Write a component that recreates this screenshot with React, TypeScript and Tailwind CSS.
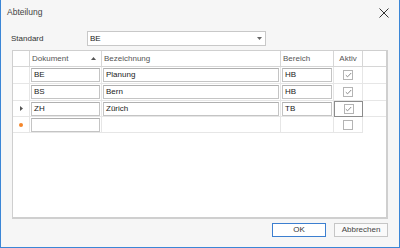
import React from "react";

const rows = [
  { doc: "BE", name: "Planung", area: "HB", active: true, current: false },
  { doc: "BS", name: "Bern", area: "HB", active: true, current: false },
  { doc: "ZH", name: "Zürich", area: "TB", active: true, current: true },
];

const font = { fontFamily: '"Liberation Sans", Arial, sans-serif' };

function Check({ checked }: { checked: boolean }) {
  return (
    <span className="flex h-[10px] w-[10px] items-center justify-center border border-[#b4b4b4] bg-white">
      {checked && (
        <svg width="7" height="6" viewBox="0 0 7 6">
          <path d="M0.8 3.2 L2.6 4.8 L6.2 1" fill="none" stroke="#8a8a8a" strokeWidth="1" />
        </svg>
      )}
    </span>
  );
}

function CellInput({ value }: { value: string }) {
  return (
    <div className="m-px flex h-[14px] flex-1 items-center border border-[#c4c4c4] border-t-[#b0b0b0] bg-white px-[2px] text-[#222]">
      {value}
    </div>
  );
}

export default function App() {
  return (
    <div
      className="flex h-[248px] w-[400px] flex-col border-x border-b border-[#3b86d6] bg-[#f6f6f6] text-[8px] text-[#333]"
      style={font}
    >
      {/* title bar */}
      <div className="flex h-[25px] items-center justify-between pl-[6px] pr-[10px]">
        <span className="text-[8.5px] text-[#444]">Abteilung</span>
        <svg width="10" height="10" viewBox="0 0 10 10">
          <path d="M0.5 0.5 L9.5 9.5 M9.5 0.5 L0.5 9.5" stroke="#333" strokeWidth="1" />
        </svg>
      </div>

      {/* standard */}
      <div className="mt-[6px] flex h-[15px] items-center pl-[10px]">
        <span className="w-[76px]">Standard</span>
        <div className="flex h-[15px] w-[179px] items-center justify-between border border-[#c8c8c8] bg-white pl-[2px] pr-[3px] text-[#222]">
          <span>BE</span>
          <svg width="5" height="3" viewBox="0 0 5 3">
            <path d="M0 0 L5 0 L2.5 3 Z" fill="#666" />
          </svg>
        </div>
      </div>

      {/* grid */}
      <div className="mx-[11px] mt-[4px] h-[169px] border border-[#cfcfcf] border-b-2 border-r-2 bg-white">
        <div className="grid grid-cols-[17px_72px_179px_53px_29px_1fr] grid-rows-[16px_17px_17px_16px_16px]">
          {/* header */}
          <div className="border-b border-r border-[#d6d6d6]" />
          <div className="flex items-center justify-between border-b border-r border-[#d6d6d6] pl-[2px] pr-[5px] text-[#555]">
            <span>Dokument</span>
            <svg width="5" height="3" viewBox="0 0 5 3">
              <path d="M0 3 L5 3 L2.5 0 Z" fill="#555" />
            </svg>
          </div>
          <div className="flex items-center border-b border-r border-[#d6d6d6] pl-[2px] text-[#555]">Bezeichnung</div>
          <div className="flex items-center border-b border-r border-[#d6d6d6] pl-[2px] text-[#555]">Bereich</div>
          <div className="flex items-center justify-center border-b border-r border-[#d6d6d6] text-[#555]">Aktiv</div>
          <div className="border-b border-[#d6d6d6]" />

          {rows.map((r) => (
            <React.Fragment key={r.doc}>
              <div className="flex items-center justify-center border-b border-r border-[#e6e6e6]">
                {r.current && (
                  <svg width="3" height="5" viewBox="0 0 3 5">
                    <path d="M0 0 L3 2.5 L0 5 Z" fill="#555" />
                  </svg>
                )}
              </div>
              <div className="flex border-b border-r border-[#e6e6e6]">
                <CellInput value={r.doc} />
              </div>
              <div className="flex border-b border-r border-[#e6e6e6]">
                <CellInput value={r.name} />
              </div>
              <div className="flex border-b border-r border-[#e6e6e6]">
                <CellInput value={r.area} />
              </div>
              <div
                className={
                  r.current
                    ? "flex items-center justify-center border border-[#8c8c8c]"
                    : "flex items-center justify-center border-b border-r border-[#e6e6e6]"
                }
              >
                <Check checked={r.active} />
              </div>
              <div className="border-b border-[#e6e6e6]" />
            </React.Fragment>
          ))}

          {/* new row */}
          <div className="flex items-center justify-center border-b border-r border-[#e6e6e6]">
            <span className="h-[4px] w-[4px] rounded-full bg-[#f5862a]" />
          </div>
          <div className="flex border-b border-r border-[#e6e6e6]">
            <CellInput value="" />
          </div>
          <div className="border-b border-r border-[#e6e6e6]" />
          <div className="border-b border-r border-[#e6e6e6]" />
          <div className="flex items-center justify-center border-b border-r border-[#e6e6e6]">
            <Check checked={false} />
          </div>
          <div />
        </div>
      </div>

      {/* buttons */}
      <div className="mt-[4px] flex justify-end gap-[8px] pr-[11px]">
        <button className="h-[14px] w-[54px] border border-[#3c7fd0] bg-white text-[8px] text-[#333]">OK</button>
        <button className="h-[14px] w-[54px] border border-[#c6c6c6] bg-[#fafafa] text-[8px] text-[#444]">Abbrechen</button>
      </div>
    </div>
  );
}
